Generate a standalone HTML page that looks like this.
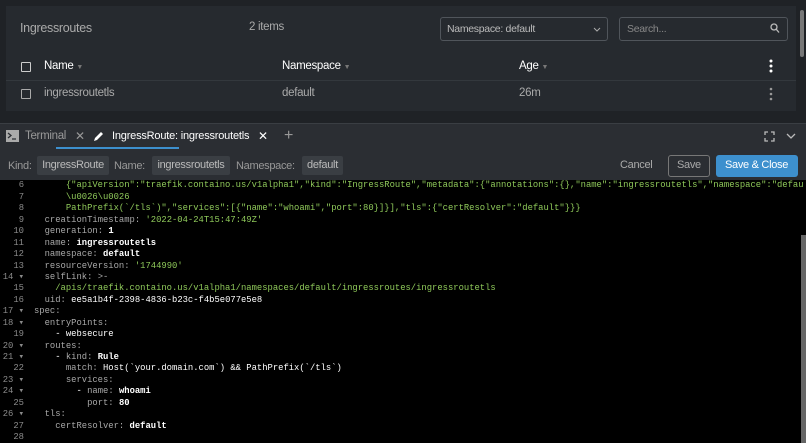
<!DOCTYPE html>
<html style="overflow:hidden"><head><meta charset="utf-8"><style>
*{margin:0;padding:0;box-sizing:border-box}
body{width:806px;height:443px;overflow:hidden;background:#1f2226;font-family:"Liberation Sans",sans-serif;position:relative;color:#ddd}
.abs{position:absolute}
.panel{left:6px;top:6px;width:790px;height:105px;background:#262a2f}
.t{position:absolute;font-size:11.5px;white-space:nowrap}
.n{letter-spacing:-0.3px}
.box{position:absolute;border:1px solid #50555b;border-radius:3px;background:#262a2f}
.cb{position:absolute;width:10px;height:10px;border:1.5px solid #ccc;border-radius:1px}
.dock{left:0;top:123px;width:806px;height:57px;background:#2b2e33;border-top:1px solid #3a3e43}
.ed{left:0;top:180px;width:806px;height:263px;background:#000;overflow:hidden}
pre{position:absolute;left:34px;top:-11px;font-family:"Liberation Mono",monospace;font-size:8.85px;line-height:11.43px;color:#ddd;white-space:pre}
.ln{position:absolute;margin-left:-34px;width:24px;text-align:right;color:#8a8a8a}
.k{color:#a8a8a8}.v{color:#fff;font-weight:bold}.s{color:#8fc95a}
.chip{position:absolute;top:156px;height:19px;background:#3a3e43;border-radius:2px;font-size:11px;color:#bbb;white-space:nowrap;text-align:center;line-height:19px;letter-spacing:-0.3px}
</style></head><body>
<div class="abs panel"></div>
<div class="t n" style="left:20px;top:21px;color:#aaa;font-size:12.5px">Ingressroutes</div>
<div class="t n" style="left:249px;top:21px;color:#aaa">2 items</div>
<div class="box" style="left:440px;top:17px;width:168px;height:24px"></div>
<div class="t n" style="left:447px;top:23px;color:#bbb;font-size:10.5px">Namespace: default</div>
<svg class="abs" style="left:593px;top:27px" width="8" height="5"><path d="M1 1l3 3 3-3" stroke="#aaa" fill="none"/></svg>
<div class="box" style="left:619px;top:17px;width:169px;height:24px"></div>
<div class="t n" style="left:627px;top:23px;color:#888;font-size:10.5px">Search...</div>
<svg class="abs" style="left:770px;top:23px" width="10" height="11"><circle cx="4" cy="4" r="3" fill="none" stroke="#bbb" stroke-width="1.3"/><line x1="6.3" y1="6.3" x2="9" y2="9.5" stroke="#bbb" stroke-width="1.3"/></svg>
<div class="abs" style="left:800px;top:10px;width:4px;height:47px;background:#777;border-radius:2px"></div>
<div class="cb" style="left:21px;top:62px"></div>
<div class="t n" style="left:44px;top:60px;color:#fff">Name <span style="color:#777;font-size:7px">▼</span></div>
<div class="t n" style="left:282px;top:60px;color:#fff">Namespace <span style="color:#777;font-size:7px">▼</span></div>
<div class="t n" style="left:519px;top:60px;color:#fff">Age <span style="color:#777;font-size:7px">▼</span></div>
<svg class="abs" style="left:768px;top:59px" width="6" height="14"><circle cx="3" cy="2" r="1.5" fill="#fff"/><circle cx="3" cy="7" r="1.5" fill="#fff"/><circle cx="3" cy="12" r="1.5" fill="#fff"/></svg>
<div class="abs" style="left:6px;top:80px;width:790px;height:1px;background:#33383d"></div>
<div class="cb" style="left:21px;top:89px;border-color:#aaa"></div>
<div class="t n" style="left:44px;top:87px;color:#aaa">ingressroutetls</div>
<div class="t n" style="left:282px;top:87px;color:#aaa">default</div>
<div class="t n" style="left:519px;top:87px;color:#aaa">26m</div>
<svg class="abs" style="left:768px;top:87px" width="6" height="14"><circle cx="3" cy="2" r="1.3" fill="#999"/><circle cx="3" cy="7" r="1.3" fill="#999"/><circle cx="3" cy="12" r="1.3" fill="#999"/></svg>

<div class="abs dock"></div>
<svg class="abs" style="left:6px;top:130px" width="13" height="12"><rect width="13" height="12" fill="#aaa"/><path d="M2 3l3 2.5-3 2.5M6 9h4" stroke="#2b2e33" stroke-width="1.3" fill="none"/></svg>
<div class="t n" style="left:25px;top:130px;color:#999">Terminal</div>
<div class="t" style="left:75px;top:129px;color:#999;font-size:12px">✕</div>
<svg class="abs" style="left:93px;top:130px" width="12" height="12"><path d="M1 11l1-3 6-6 2 2-6 6z" fill="#fff"/></svg>
<div class="t" style="left:112px;top:130px;color:#fff;font-size:11px;letter-spacing:-0.2px">IngressRoute: ingressroutetls</div>
<div class="t" style="left:258px;top:129px;color:#fff;font-size:12px">✕</div>
<div class="t" style="left:284px;top:127px;color:#999;font-size:16px">+</div>
<div class="abs" style="left:56px;top:147px;width:123px;height:2px;background:#3d90ce"></div>
<svg class="abs" style="left:764px;top:131px" width="11" height="11"><path d="M1 4V1h3M7 1h3v3M10 7v3H7M4 10H1V7" stroke="#bbb" stroke-width="1.3" fill="none"/></svg>
<svg class="abs" style="left:786px;top:133px" width="10" height="7"><path d="M1 1l4 4 4-4" stroke="#bbb" stroke-width="1.3" fill="none"/></svg>

<div class="t n" style="left:8px;top:160px;color:#999;font-size:11px">Kind:</div>
<div class="chip" style="left:37px;width:72px">IngressRoute</div>
<div class="t n" style="left:114px;top:160px;color:#999;font-size:11px">Name:</div>
<div class="chip" style="left:152px;width:78px">ingressroutetls</div>
<div class="t n" style="left:236px;top:160px;color:#999;font-size:11px">Namespace:</div>
<div class="chip" style="left:302px;width:41px">default</div>
<div class="t n" style="left:620px;top:159px;color:#aaa;font-size:11px">Cancel</div>
<div class="box" style="left:668px;top:155px;width:42px;height:22px;background:transparent;border-color:#777"></div>
<div class="t n" style="left:677px;top:159px;color:#aaa;font-size:11px">Save</div>
<div class="abs" style="left:716px;top:155px;width:82px;height:22px;background:#3d90ce;border-radius:3px"></div>
<div class="t n" style="left:725px;top:159px;color:#fff;font-size:11px">Save &amp; Close</div>

<div class="abs ed">
<pre><span class="ln">5</span>
<span class="ln">6</span>      <span class="s">{"apiVersion":"traefik.containo.us/v1alpha1","kind":"IngressRoute","metadata":{"annotations":{},"name":"ingressroutetls","namespace":"defau</span>
<span class="ln">7</span>      <span class="s">\u0026\u0026</span>
<span class="ln">8</span>      <span class="s">PathPrefix(`/tls`)","services":[{"name":"whoami","port":80}]}],"tls":{"certResolver":"default"}}}</span>
<span class="ln">9</span>  <span class="k">creationTimestamp:</span> <span class="s">'2022-04-24T15:47:49Z'</span>
<span class="ln">10</span>  <span class="k">generation:</span> <span class="v">1</span>
<span class="ln">11</span>  <span class="k">name:</span> <span class="v">ingressroutetls</span>
<span class="ln">12</span>  <span class="k">namespace:</span> <span class="v">default</span>
<span class="ln">13</span>  <span class="k">resourceVersion:</span> <span class="s">'1744990'</span>
<span class="ln">14 ▾</span>  <span class="k">selfLink:</span> <span class="k">&gt;-</span>
<span class="ln">15</span>    <span class="s">/apis/traefik.containo.us/v1alpha1/namespaces/default/ingressroutes/ingressroutetls</span>
<span class="ln">16</span>  <span class="k">uid:</span> <span style="color:#fff">ee5a1b4f-2398-4836-b23c-f4b5e077e5e8</span>
<span class="ln">17 ▾</span><span class="k">spec:</span>
<span class="ln">18 ▾</span>  <span class="k">entryPoints:</span>
<span class="ln">19</span>    <span style="color:#fff">- websecure</span>
<span class="ln">20 ▾</span>  <span class="k">routes:</span>
<span class="ln">21 ▾</span>    <span style="color:#fff">-</span> <span class="k">kind:</span> <span class="v">Rule</span>
<span class="ln">22</span>      <span class="k">match:</span> <span style="color:#fff">Host(`your.domain.com`) &amp;&amp; PathPrefix(`/tls`)</span>
<span class="ln">23 ▾</span>      <span class="k">services:</span>
<span class="ln">24 ▾</span>        <span style="color:#fff">-</span> <span class="k">name:</span> <span class="v">whoami</span>
<span class="ln">25</span>          <span class="k">port:</span> <span class="v">80</span>
<span class="ln">26 ▾</span>  <span class="k">tls:</span>
<span class="ln">27</span>    <span class="k">certResolver:</span> <span class="v">default</span>
<span class="ln">28</span>
</pre>
<div class="abs" style="left:801px;top:55px;width:5px;height:208px;background:#666"></div>
</div>
</body></html>
